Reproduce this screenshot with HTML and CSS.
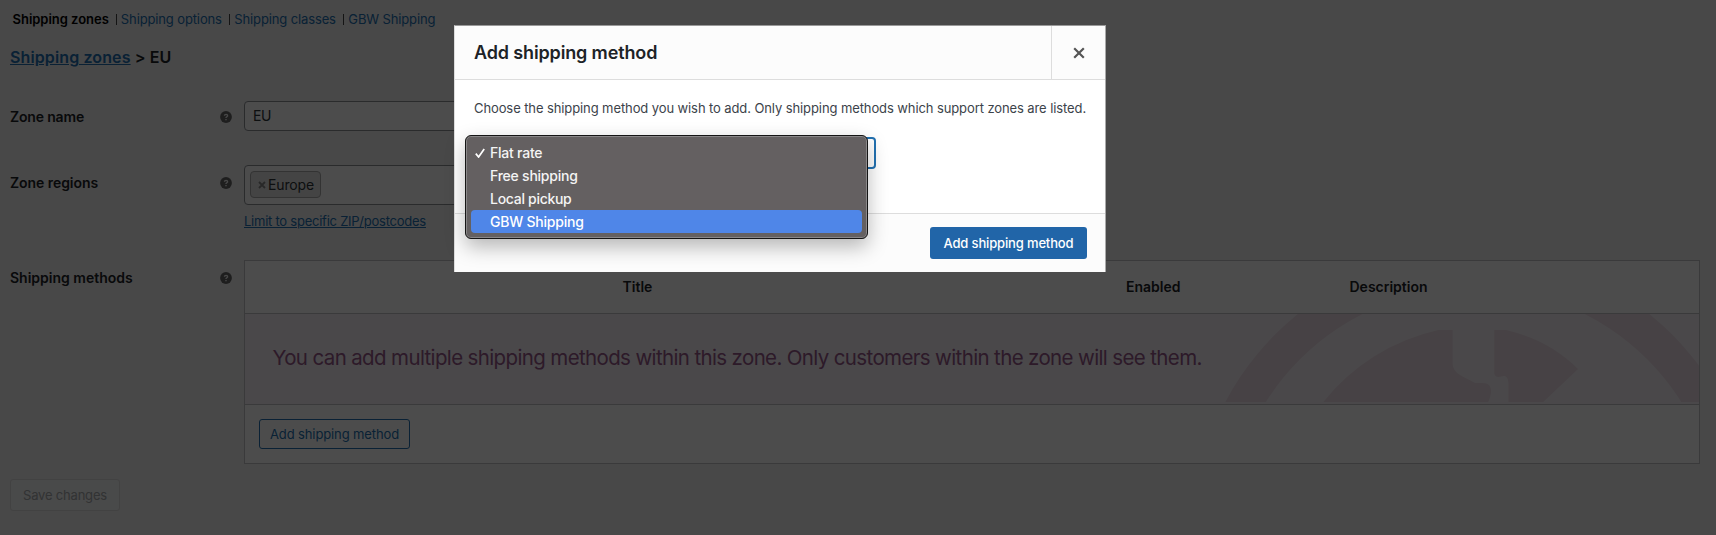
FILE: index.html
```html
<!DOCTYPE html>
<html lang="en">
<head>
<meta charset="utf-8">
<title>Shipping zones</title>
<link rel="stylesheet" href="styles.css">
</head>
<body>
<main class="page">
  <nav class="tabs"><b class="t-cur">Shipping zones</b><i></i><a class="t-opt">Shipping options</a><i></i><a class="t-opt">Shipping classes</a><i></i><a class="t-opt">GBW Shipping</a></nav>
  <h2 class="crumbs"><a>Shipping zones</a> <span>&gt; EU</span></h2>

  <div class="row row-name">
    <div class="label"><span class="l-name">Zone name</span><svg class="help" viewBox="0 0 12 12"><circle cx="6" cy="6" r="5.9"/><path d="M4.500 4.800C4.500 2.800 7.600 2.900 7.600 4.700C7.600 5.800 6 5.800 6 7M6 8V9.200"/></svg></div>
    <div class="field input"><span class="f-eu">EU</span></div>
  </div>
  <div class="row row-regions">
    <div class="label"><span class="l-reg">Zone regions</span><svg class="help" viewBox="0 0 12 12"><circle cx="6" cy="6" r="5.9"/><path d="M4.500 4.800C4.500 2.800 7.600 2.900 7.600 4.700C7.600 5.800 6 5.800 6 7M6 8V9.200"/></svg></div>
    <div class="field">
      <div class="regions"><span class="tag"><svg class="tag-x" viewBox="0 0 8 8"><path d="M1 1L7 7M7 1L1 7"/></svg><span class="f-europe">Europe</span></span></div>
      <a class="limit">Limit to specific ZIP/postcodes</a>
    </div>
  </div>
  <div class="row row-methods">
    <div class="label"><span>Shipping methods</span><svg class="help" viewBox="0 0 12 12"><circle cx="6" cy="6" r="5.9"/><path d="M4.500 4.800C4.500 2.800 7.600 2.900 7.600 4.700C7.600 5.800 6 5.800 6 7M6 8V9.200"/></svg></div>
    <div class="table">
      <div class="thead"><span class="h-title">Title</span><span class="h-en">Enabled</span><span class="h-desc">Description</span></div>
      <div class="banner"><span class="b-text">You can add multiple shipping methods within this zone. Only customers within the zone will see them.</span>
        <svg class="globe" viewBox="1219 314 480 88"><path fill-rule="evenodd" d="M1193 533a280.6 280.6 0 1 0 561.2 0a280.6 280.6 0 1 0 -561.2 0ZM1228 533a245.6 245.6 0 1 1 491.2 0a245.6 245.6 0 1 1 -491.2 0Z"/><path d="M1323 402.500A203 203 0 0 1 1438.500 330H1452.600V363C1452.600 374 1463 376 1475 383H1482C1494 383 1492 394 1488 402.500ZM1494.300 330H1506C1535 337 1559 350 1578 369L1542.600 402.500H1508.500V383C1508 375 1504 375.500 1501 376.500Q1496 378 1494.300 374Z"/></svg>
      </div>
      <div class="tfoot"><span class="btn-outline">Add shipping method</span></div>
    </div>
  </div>
  <div class="save">Save changes</div>
</main>
<div class="backdrop"></div>
<section class="modal">
  <header class="m-head"><h1 class="m-title">Add shipping method</h1><div class="m-close"><svg viewBox="0 0 12 12"><path d="M1.200 1.200L10.800 10.800M10.800 1.200L1.200 10.800"/></svg></div></header>
  <div class="m-body"><p class="m-text">Choose the shipping method you wish to add. Only shipping methods which support zones are listed.</p><div class="select"></div></div>
  <footer class="m-foot"><span class="btn-primary">Add shipping method</span></footer>
  <div class="menu">
    <div class="item"><svg class="check" viewBox="0 0 10 10"><path d="M.8 5.600L3.600 9L9.200 1"/></svg>Flat rate</div>
    <div class="item">Free shipping</div>
    <div class="item pickup">Local pickup</div>
    <div class="item active">GBW Shipping</div>
  </div>
</section>
</body>
</html>
```
FILE: styles.css
```css
* { box-sizing: border-box; margin: 0; padding: 0; }
html, body { height: 100%; overflow: hidden; }
body { background: #f0f0f1; font-family: Inter, "Liberation Sans", sans-serif; font-size: 14px; color: #1d2327; position: relative; }
span, a, b { white-space: nowrap; }
a { color: #2271b1; }
.page { padding: 9px 16px 0 10px; height: 535px; }
.tabs { display: flex; align-items: center; height: 20px; padding-left: 2.5px; font-size: 13px; line-height: 20px; }
.tabs b { color: #000; font-weight: 600; letter-spacing: -.02px; }
.tabs i { width: 1px; height: 11px; background: #444; margin: 0 4px 0 7.500px; }
.tabs i:first-of-type { margin-left: 7px; }
.t-opt { letter-spacing: -.13px; }
.crumbs { font-size: 16px; line-height: 24px; font-weight: 600; margin-top: 16px; white-space: nowrap; letter-spacing: .12px; }
.crumbs a { text-decoration: underline; }
.row { display: flex; }
.row-name { margin-top: 32px; }
.row-regions { margin-top: 34px; }
.row-methods { margin-top: 29px; }
.label { width: 234px; padding-right: 12px; display: flex; justify-content: space-between; align-items: center; font-weight: 600; height: 30px; }
.l-name { letter-spacing: -.17px; }
.l-reg { letter-spacing: -.06px; }
.help { width: 12px; height: 12px; fill: #666; margin-top: 1px; }
.help path { fill: none; stroke: #f0f0f1; stroke-width: 1.4; }
.field { width: 400px; }
.input, .regions { border: 1px solid #8c8f94; border-radius: 4px; background: #fff; color: #2c3338; }
.input { height: 30px; padding-left: 8px; line-height: 28px; }
.f-eu { letter-spacing: -.4px; }
.row-regions .label { margin-top: 2px; }
.regions { height: 40px; padding: 5px; }
.tag { display: flex; align-items: center; width: 71px; height: 27px; border: 1px solid #aaa; border-radius: 4px; background: #e4e4e4; padding-left: 7px; gap: 2px; }
.f-europe { letter-spacing: -.15px; }
.tag-x { width: 8px; height: 8px; fill: none; stroke: #888; stroke-width: 1.9; margin-top: 1px; }
.limit { display: block; margin-top: 7px; font-size: 13px; line-height: 19px; text-decoration: underline; letter-spacing: -.245px; width: max-content; }
.row-methods .label { margin-top: 2px; }
.table { width: 1456px; height: 204px; border: 1px solid #c3c4c7; background: #fff; }
.thead { height: 53px; border-bottom: 1px solid #c3c4c7; display: flex; align-items: center; font-weight: 600; padding: 0 0 2px 377.500px; }
.h-title { width: 503.500px; }
.h-en { width: 223.500px; }
.banner { height: 91px; border-bottom: 1px solid #c3c4c7; background: #f8f1f8; color: #96588a; font-size: 20.5px; letter-spacing: -.635px; display: flex; justify-content: space-between; padding-left: 27.500px; line-height: 88px; }
.globe { width: 480px; height: 88px; fill: #eddde6; flex: none; }
.tfoot { padding: 14px; }
.btn-outline { display: block; width: 151px; height: 30px; border: 1px solid #2271b1; border-radius: 3px; color: #2271b1; font-size: 13px; line-height: 28px; padding-left: 10px; letter-spacing: -.12px; }
.save { width: 110px; height: 32px; margin-top: 15px; border: 1px solid #dcdcde; border-radius: 3px; background: #f6f7f7; color: #a7aaad; font-size: 13px; line-height: 30px; padding-left: 12px; letter-spacing: -.19px; }
.backdrop { position: absolute; inset: 0; background: rgba(0,0,0,.7); }
.modal { position: absolute; left: 454px; top: 25px; width: 652px; height: 247px; background: #fff; display: flex; flex-direction: column; border-left: 1px solid #ddd; border-right: 1px solid #aaa; border-top: 1px solid #999; }
.m-head { height: 54px; background: #fcfcfc; border-bottom: 1px solid #ddd; display: flex; justify-content: space-between; padding-left: 19px; }
.m-title { font-size: 18px; font-weight: 600; line-height: 54px; white-space: nowrap; letter-spacing: -.14px; }
.m-close { width: 54px; border-left: 1px solid #ddd; display: flex; align-items: center; justify-content: center; }
.m-close svg { width: 12px; height: 12px; fill: none; stroke: #555; stroke-width: 2.2; }
.m-body { height: 133px; padding: 18px 19px; }
.m-text { font-size: 13px; line-height: 20px; color: #3c434a; white-space: nowrap; width: max-content; letter-spacing: -.1px; }
.select { width: 402px; height: 32px; margin-top: 19px; border: 2px solid #2271b1; border-radius: 4px; }
.m-foot { flex: 1; background: #fcfcfc; border-top: 1px solid #ddd; padding: 13px 18px; display: flex; justify-content: flex-end; }
.btn-primary { width: 157px; height: 32px; background: #2165a8; border-radius: 3px; color: #fff; font-size: 13px; font-weight: 500; line-height: 32px; padding-left: 13.500px; letter-spacing: -.15px; }
.menu { position: absolute; left: 10px; top: 109px; width: 403px; height: 104px; border: 1px solid #151515; border-radius: 6px; background: #646061; box-shadow: inset 0 0 0 1px #8a8889, 0 8px 20px rgba(0,0,0,.28); padding: 5px; color: #f4f4f4; font-weight: 500; letter-spacing: -.23px; }
.item { height: 23px; line-height: 23px; padding-left: 19px; border-radius: 4px; position: relative; }
.pickup { letter-spacing: -.29px; }
.active { background: #4f86e8; color: #fff; }
.check { position: absolute; left: 4px; top: 7px; width: 10px; height: 10px; fill: none; stroke: #fff; stroke-width: 1.7; }
```
